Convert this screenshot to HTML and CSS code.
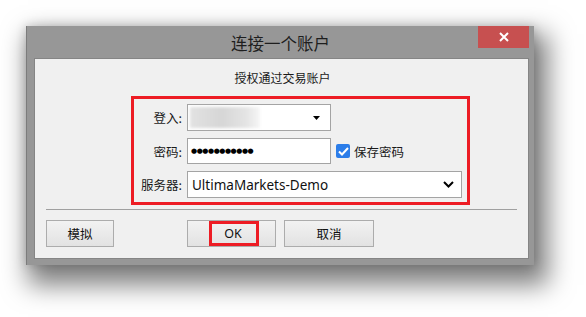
FILE: index.html
```html
<!DOCTYPE html>
<html lang="zh">
<head>
<meta charset="utf-8">
<title>连接一个账户</title>
<link rel="stylesheet" href="styles.css">
</head>
<body>
<div class="window">
  <div class="titlebar">
    <span class="title">连接一个账户</span>
    <div class="close"><svg width="10" height="10" viewBox="0 0 10 10"><path d="M1 1L9 9M9 1L1 9" stroke="#fff" stroke-width="2"/></svg></div>
  </div>
  <div class="panel">
    <div class="subtitle">授权通过交易账户</div>
    <div class="highlight">
      <div class="form">
        <label class="lbl">登入:</label>
        <div class="field combo"><span class="blur"></span><svg class="tri" width="7" height="4" viewBox="0 0 7 4"><path d="M0 0H7L3.5 4Z" fill="#000"/></svg></div>
        <div></div>
        <label class="lbl">密码:</label>
        <div class="field pwd">●●●●●●●●●●●</div>
        <div class="check"><span class="box"><svg width="11" height="9" viewBox="0 0 11 9"><path d="M1 4.5L4 7.5L10 1" stroke="#fff" stroke-width="2" fill="none"/></svg></span><span>保存密码</span></div>
        <label class="lbl">服务器:</label>
        <div class="field select"><span>UltimaMarkets-Demo</span><svg width="11" height="7" viewBox="0 0 11 7"><path d="M1 1L5.5 5.5L10 1" stroke="#000" stroke-width="2" fill="none"/></svg></div>
      </div>
    </div>
    <div class="sep"></div>
    <div class="buttons">
      <div class="btn b-demo">模拟</div>
      <div class="btn b-ok">OK<span class="okmark"></span></div>
      <div class="btn b-cancel">取消</div>
    </div>
  </div>
</div>
</body>
</html>
```
FILE: styles.css
```css
html, body { margin: 0; padding: 0; background: #fff; }
body {
  min-height: 317px;
  box-sizing: border-box;
  padding: 26px 0 0 26px;
  font-family: "Noto Sans", "Noto Sans CJK SC", sans-serif;
  color: #1a1a1a;
}
.window {
  width: 508px;
  height: 239px;
  box-sizing: border-box;
  background: #979797;
  border-left: 1px solid #7c7c7c;
  padding: 0 5px 6px 7px;
  box-shadow: 8px 14px 24px 6px rgba(0,0,0,0.5), 0 0 10px rgba(0,0,0,0.18);
}
.titlebar {
  position: relative;
  height: 32px;
  display: flex;
  align-items: center;
  justify-content: center;
}
.title {
  font-family: "Noto Sans CJK SC", sans-serif;
  font-size: 16.5px;
  color: #1e1e1e;
  margin-top: 1px;
  margin-right: 2px;
}
.close {
  position: absolute;
  right: 0; top: 0;
  width: 51px; height: 22px;
  background: #c75050;
  display: flex; align-items: center; justify-content: center;
}
.panel {
  height: 201px;
  box-sizing: border-box;
  background: #f0f0f0;
  border: 1px solid #858585;
  display: flex;
  flex-direction: column;
}
.subtitle {
  height: 37px;
  line-height: 37px;
  text-align: center;
  font-family: "Noto Sans CJK SC", sans-serif;
  font-size: 12px;
  padding-left: 2px;
}
.highlight {
  margin-left: 96px;
  width: 339px;
  height: 109px;
  box-sizing: border-box;
  border: 3px solid #ed1c24;
  padding: 5px 5px 0 0;
}
.form {
  display: grid;
  grid-template-columns: 50px 144px 128px;
  grid-template-rows: 27px 26px 27px;
  column-gap: 3px;
  row-gap: 7px;
}
.lbl {
  font-family: "Noto Sans CJK SC", sans-serif;
  font-size: 12.5px;
  display: flex;
  align-items: center;
  justify-content: flex-end;
  padding-right: 2px;
}
.field {
  background: #fff;
  border: 1px solid #a4a4a4;
  box-sizing: border-box;
  display: flex;
  align-items: center;
}
.combo { padding: 0 10px 0 2px; justify-content: space-between; }
.blur {
  width: 70px; height: 21px;
  background: linear-gradient(90deg, #e2e2e2, #d6d6d6 45%, #e4e4e4 80%, #f6f6f6);
  filter: blur(1.5px);
}
.pwd {
  padding-left: 3px;
  font-family: "DejaVu Sans", sans-serif;
  font-size: 7px;
  letter-spacing: -0.45px;
  color: #000;
}
.check {
  display: flex;
  align-items: center;
  gap: 4px;
  padding-left: 2px;
  font-family: "Noto Sans CJK SC", sans-serif;
  font-size: 12.5px;
}
.box {
  width: 14px; height: 14px;
  background: #2b7de9;
  border-radius: 2px;
  display: flex; align-items: center; justify-content: center;
}
.select {
  grid-column: 2 / 4;
  justify-content: space-between;
  padding: 0 7px 0 4px;
  font-size: 13.5px;
  color: #111;
}
.sep {
  height: 1px;
  background: #a0a0a0;
  margin: 4px 11px 0;
}
.buttons {
  display: flex;
  margin: 10px 0 0 11px;
}
.btn {
  position: relative;
  height: 27px;
  box-sizing: border-box;
  border: 1px solid #acacac;
  background: linear-gradient(#f2f2f2, #e2e2e2);
  display: flex; align-items: center; justify-content: center;
  font-family: "Noto Sans", "Noto Sans CJK SC", sans-serif;
  font-size: 12.5px;
  color: #111;
}
.b-demo { width: 68px; }
.b-ok { width: 89px; margin-left: 73px; padding-left: 3px; }
.b-cancel { width: 90px; margin-left: 8px; }
.okmark {
  position: absolute;
  left: 21px; top: 0;
  width: 50px; height: 25px;
  box-sizing: border-box;
  border: 3px solid #ed1c24;
}
```
